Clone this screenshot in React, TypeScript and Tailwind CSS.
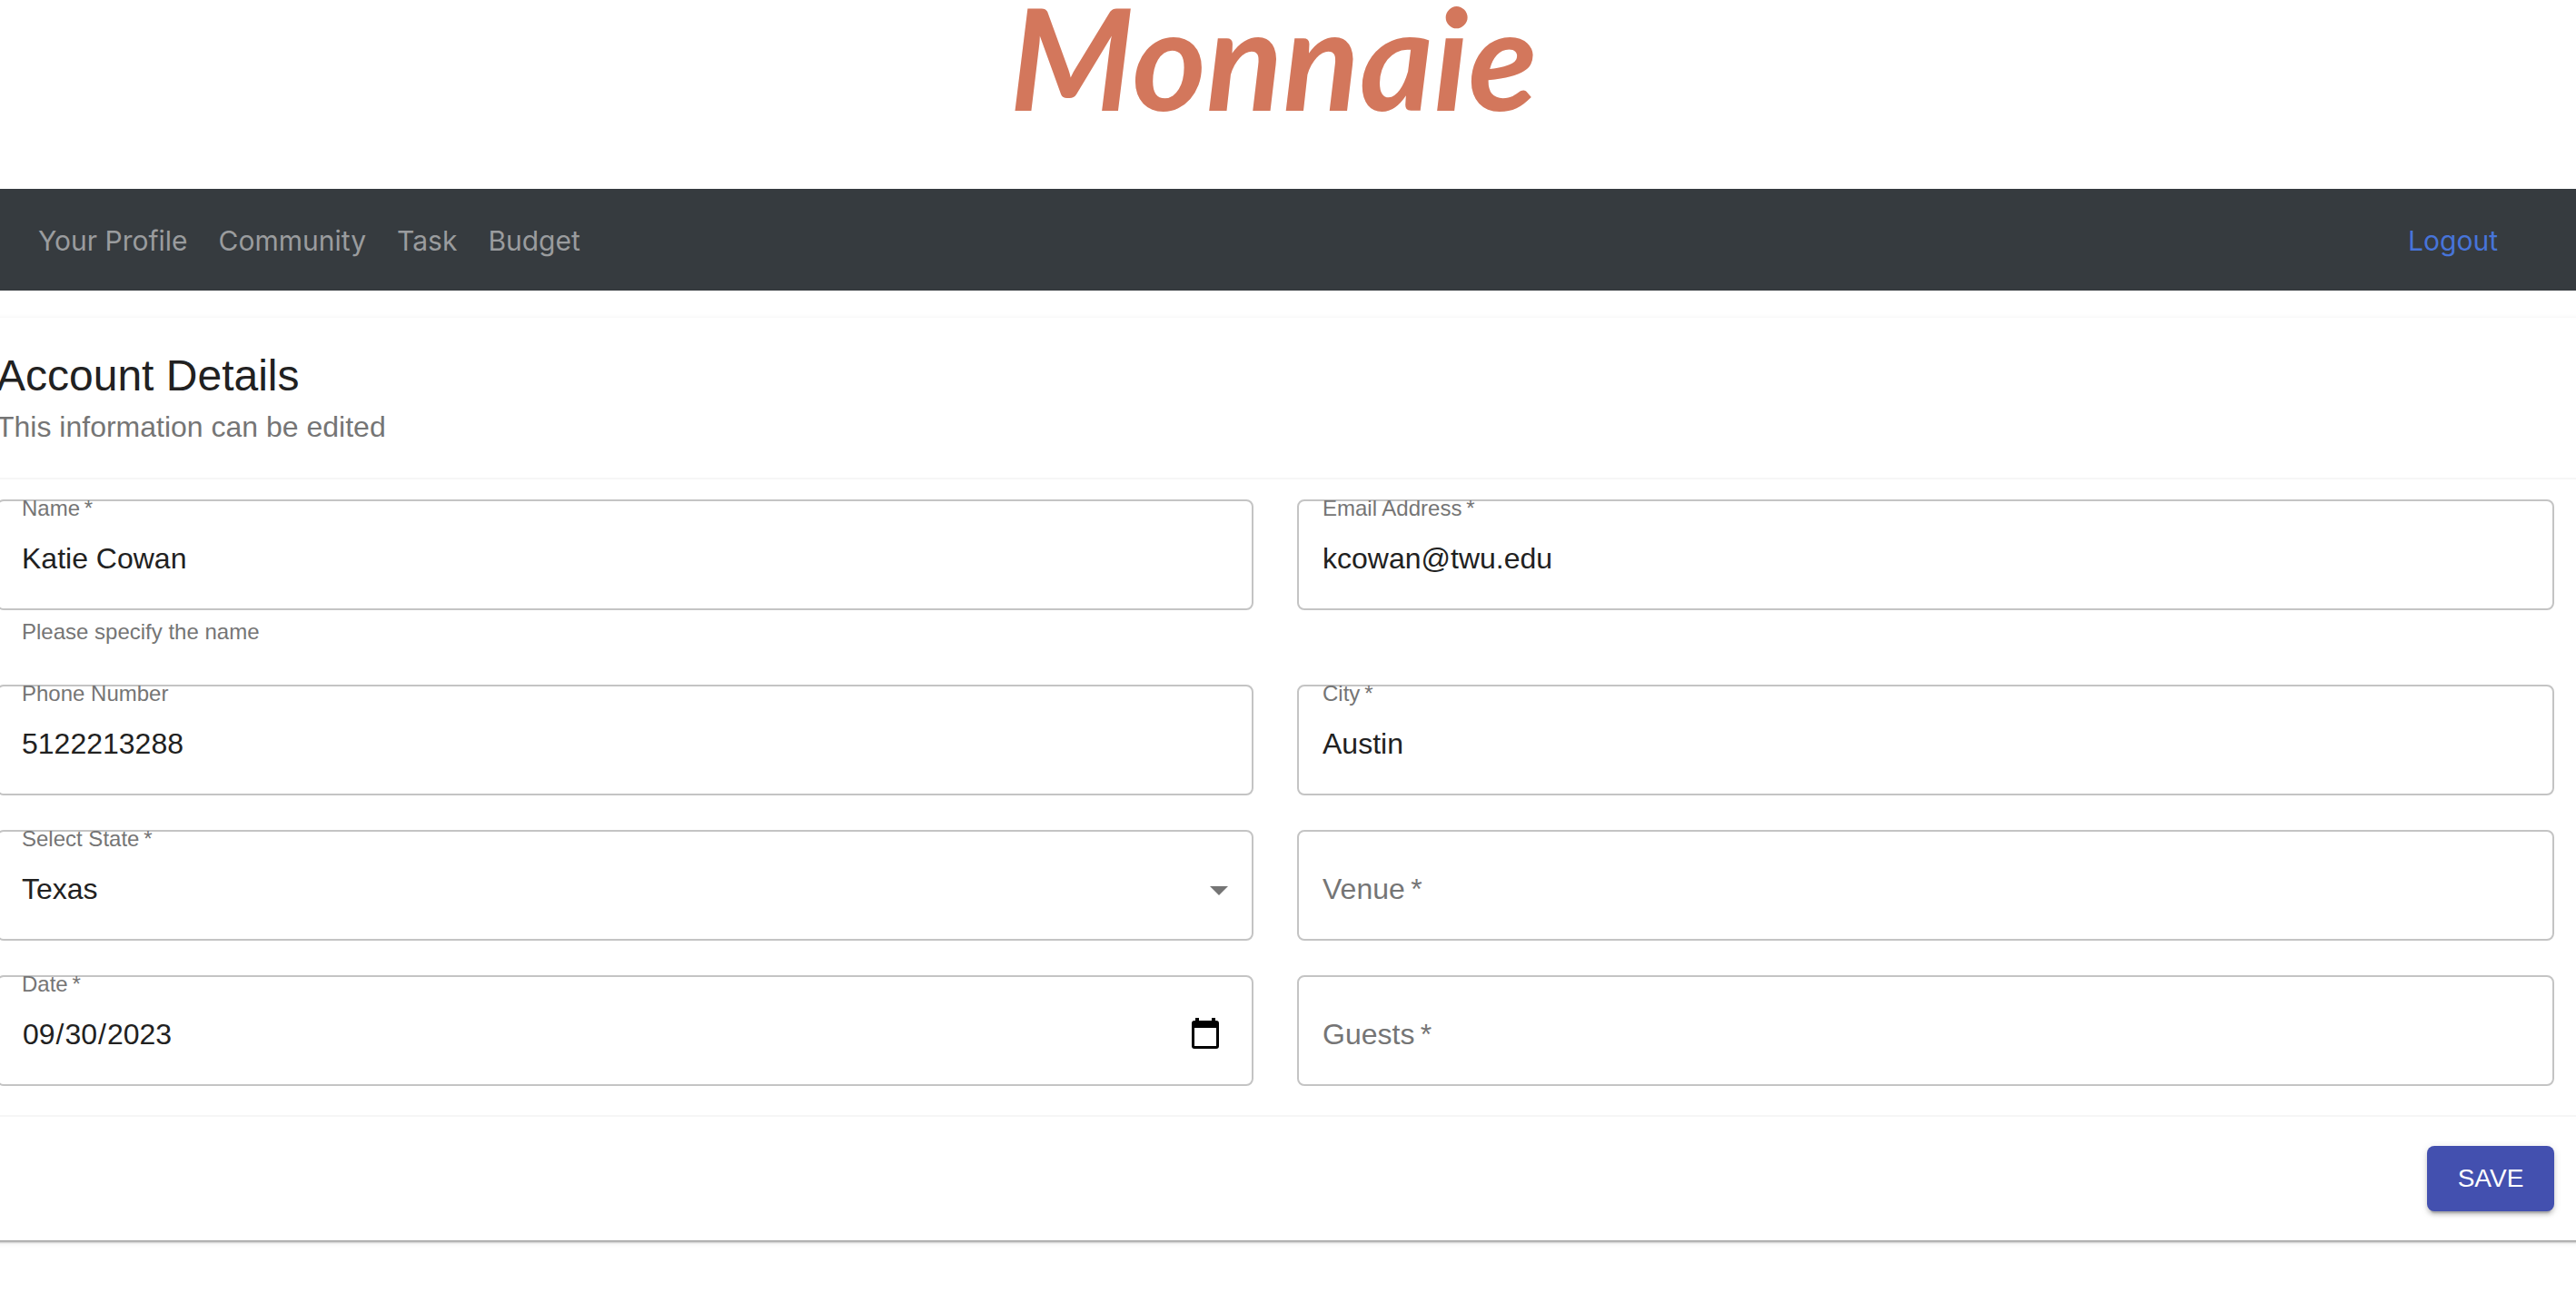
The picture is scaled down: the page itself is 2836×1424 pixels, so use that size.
import type { ReactNode } from "react";

const links = ["Your Profile", "Community", "Task", "Budget"];

const control =
  "block h-[94px] w-full appearance-none bg-transparent px-[26px] text-[32px] leading-[48px] text-[#212121] outline-none";

type FieldProps = {
  id: string;
  label: string;
  required?: boolean;
  empty?: boolean;
  helper?: string;
  children: ReactNode;
};

function Field({ id, label, required, empty, helper, children }: FieldProps) {
  return (
    <div>
      <div className="relative rounded-lg border-2 border-[#c4c4c4] pb-2">
        <label
          htmlFor={id}
          className={
            empty
              ? "pointer-events-none absolute inset-x-0 top-4 px-[26px] text-[32px] leading-[94px] text-[#757575]"
              : "block px-[26px] text-[24px] leading-4 text-[#757575]"
          }
        >
          {label}
          {required && <span aria-hidden="true">{"\u2009*"}</span>}
        </label>
        <div className={empty ? "relative pt-4" : "relative"}>{children}</div>
      </div>
      {helper && (
        <p className="px-7 pt-1 text-[24px] leading-10 text-[#757575]">{helper}</p>
      )}
    </div>
  );
}

export default function App() {
  return (
    <div className="overflow-x-hidden bg-white font-['Liberation_Sans',Arial,sans-serif] text-[#212121]">
      <header className="flex h-[208px] justify-center pr-8">
        <h1 className="font-['Lato',cursive] text-[156px] leading-[124px] font-bold text-[#d3775c] italic">
          Monnaie
        </h1>
      </header>

      <nav className="flex h-28 items-center justify-between bg-[#363b3f] pt-0.5 pr-[86px] pl-[42px] font-['Inter',sans-serif] text-[30px]">
        <div className="flex gap-[34px]">
          {links.map((name) => (
            <a key={name} href="#" className="text-[#9a9c9e]">
              {name}
            </a>
          ))}
        </div>
        <a href="#" className="text-[#4774d9]">
          Logout
        </a>
      </nav>

      <main className="-mx-2 mt-[30px] mb-14 bg-white px-2 shadow-[0_4px_2px_-2px_rgba(0,0,0,0.2),0_2px_2px_0_rgba(0,0,0,0.14),0_2px_6px_0_rgba(0,0,0,0.12)]">
        <form onSubmit={(e) => e.preventDefault()}>
          <div className="-ml-1 py-8">
            <h2 className="text-[48px] leading-[64px]">Account Details</h2>
            <p className="text-[32px] leading-[48px] text-[#757575]">
              This information can be edited
            </p>
          </div>

          <div className="border-y-2 border-[#f6f6f6]">
            <div className="-ml-1 grid grid-cols-2 items-start gap-x-12 gap-y-[38px] pt-[22px] pr-6 pb-8">
              <Field id="name" label="Name" required helper="Please specify the name">
                <input id="name" type="text" className={control} defaultValue="Katie Cowan" />
              </Field>
              <Field id="email" label="Email Address" required>
                <input id="email" type="email" className={control} defaultValue="kcowan@twu.edu" />
              </Field>
              <Field id="phone" label="Phone Number">
                <input id="phone" type="tel" className={control} defaultValue="5122213288" />
              </Field>
              <Field id="city" label="City" required>
                <input id="city" type="text" className={control} defaultValue="Austin" />
              </Field>
              <Field id="state" label="Select State" required>
                <select id="state" className={control} defaultValue="Texas">
                  <option>Texas</option>
                </select>
                <svg
                  className="pointer-events-none absolute top-6 right-3 size-12"
                  viewBox="0 0 24 24"
                  fill="#757575"
                  aria-hidden="true"
                >
                  <path d="M7 10l5 5 5-5z" />
                </svg>
              </Field>
              <Field id="venue" label="Venue" required empty>
                <input id="venue" type="text" className={control} />
              </Field>
              <Field id="date" label="Date" required>
                <input
                  id="date"
                  type="date"
                  className={`${control} [&::-webkit-calendar-picker-indicator]:opacity-0`}
                  defaultValue="2023-09-30"
                />
                <svg
                  className="pointer-events-none absolute top-[29px] right-9 h-[34px] w-[30px]"
                  viewBox="0 0 30 34"
                  aria-hidden="true"
                >
                  <path
                    fillRule="evenodd"
                    d="M4 0h4v3h14V0h4v3h1a3 3 0 0 1 3 3v25a3 3 0 0 1-3 3H3a3 3 0 0 1-3-3V6a3 3 0 0 1 3-3h1zM3 11v20h24V11z"
                  />
                </svg>
              </Field>
              <Field id="guests" label="Guests" required empty>
                <input id="guests" type="text" className={control} />
              </Field>
            </div>
          </div>

          <div className="flex justify-end py-8 pr-6">
            <button
              type="submit"
              className="h-[72px] w-[140px] rounded-lg bg-[#4350af] text-[28px] text-white shadow-[0_6px_2px_-4px_rgba(0,0,0,0.2),0_4px_4px_0_rgba(0,0,0,0.14),0_2px_10px_0_rgba(0,0,0,0.12)]"
            >
              SAVE
            </button>
          </div>
        </form>
      </main>
    </div>
  );
}
